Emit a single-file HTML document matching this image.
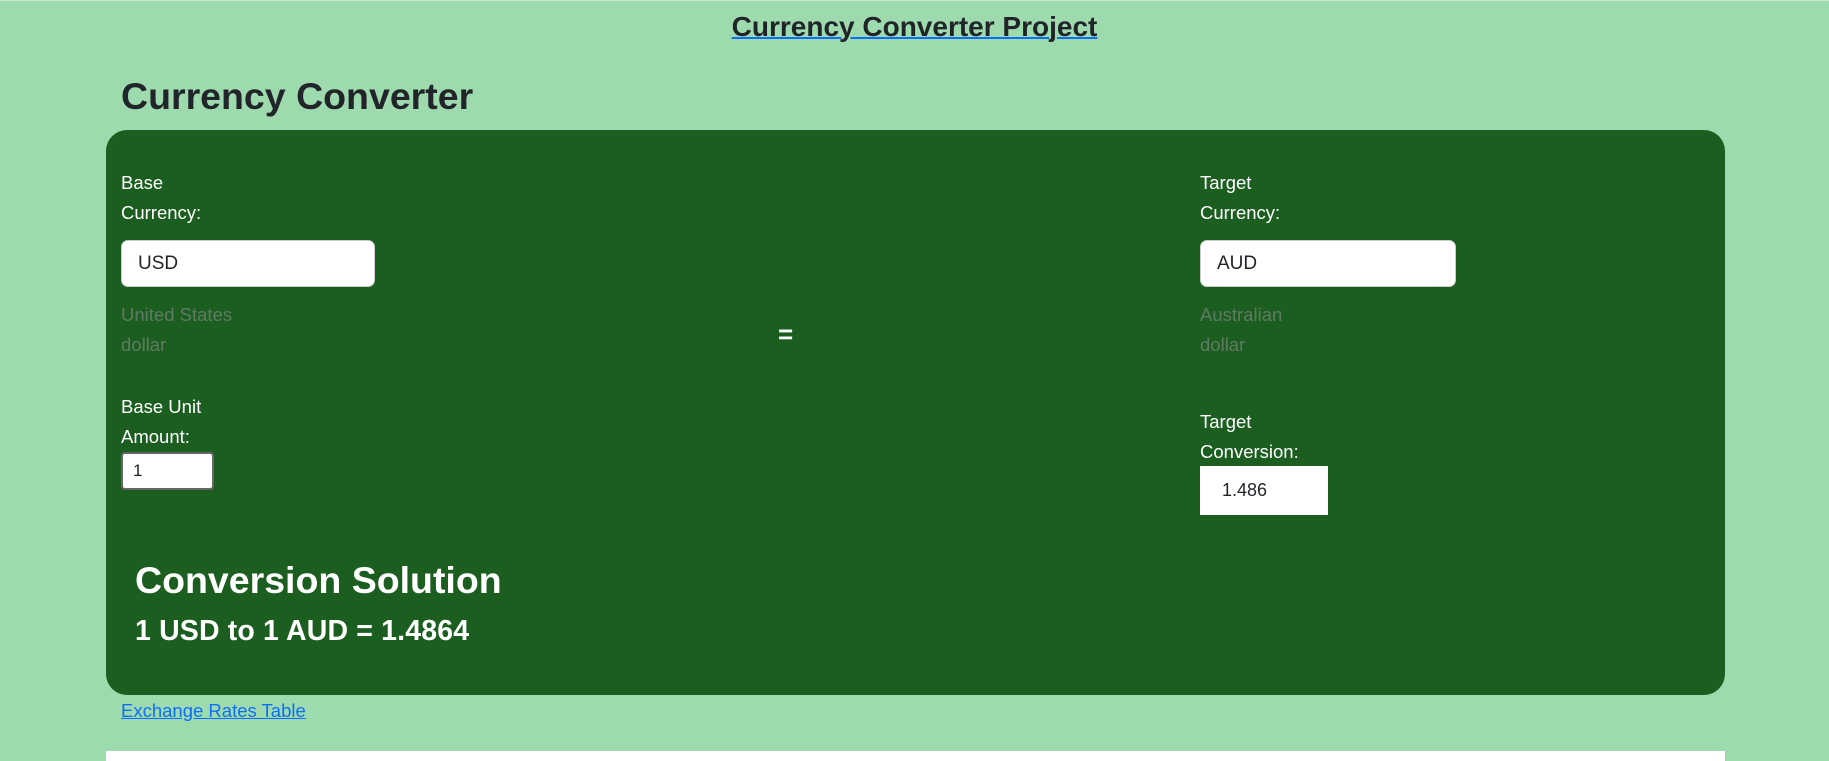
<!DOCTYPE html>
<html><head><meta charset="utf-8"><style>
body{margin:0;width:1829px;height:757px;background:#9ddbaf;font-family:"Liberation Sans",sans-serif;position:relative;overflow:hidden;border-top:1px solid #c8e8d0;box-sizing:border-box}
.a{position:absolute;white-space:nowrap}
.lbl{color:#fff;font-size:18.5px;line-height:30px}
.sub{color:#5f7a63;font-size:18.5px;line-height:30px}
.inp{position:absolute;background:#fff;border:1px solid #ccc;border-radius:7px;box-sizing:border-box;font-size:19px;color:#212529;padding-left:16px;display:flex;align-items:center}
</style></head><body>
<div class="a" style="left:0;width:1829px;text-align:center;top:10px;font-size:28px;font-weight:bold;color:#212529;"><span style="text-decoration:underline;text-decoration-color:#0d6efd;text-decoration-thickness:2px">Currency Converter Project</span></div>
<div class="a" style="left:121px;top:74px;font-size:37.5px;font-weight:bold;color:#212529">Currency Converter</div>
<div class="a" style="left:106px;top:129px;width:1619px;height:565px;background:#1b5e20;border-radius:21px"></div>
<div class="a lbl" style="left:121px;top:167px">Base<br>Currency:</div>
<div class="inp" style="left:121px;top:239px;width:254px;height:47px">USD</div>
<div class="a sub" style="left:121px;top:299px">United States<br>dollar</div>
<div class="a" style="left:778px;top:318px;color:#fff;font-size:26px;font-weight:bold">=</div>
<div class="a lbl" style="left:121px;top:391px">Base Unit<br>Amount:</div>
<div class="inp" style="left:121px;top:451px;width:93px;height:38px;border:2px solid #666;border-radius:4px;padding-left:10px;font-size:17px">1</div>
<div class="a lbl" style="left:1200px;top:167px">Target<br>Currency:</div>
<div class="inp" style="left:1200px;top:239px;width:256px;height:47px">AUD</div>
<div class="a sub" style="left:1200px;top:299px">Australian<br>dollar</div>
<div class="a lbl" style="left:1200px;top:406px">Target<br>Conversion:</div>
<div class="inp" style="left:1200px;top:465px;width:128px;height:49px;border:none;border-radius:0;padding-left:22px;font-size:18px">1.486</div>
<div class="a" style="left:135px;top:558px;color:#fff;font-size:37.5px;font-weight:bold">Conversion Solution</div>
<div class="a" style="left:135px;top:614px;color:#fff;font-size:28.5px;font-weight:bold;letter-spacing:0.15px">1 USD to 1 AUD = 1.4864</div>
<div class="a" style="left:121px;top:699px;color:#0d6efd;font-size:18.5px;text-decoration:underline">Exchange Rates Table</div>
<div class="a" style="left:106px;top:750px;width:1619px;height:10px;background:#fff"></div>
</body></html>
